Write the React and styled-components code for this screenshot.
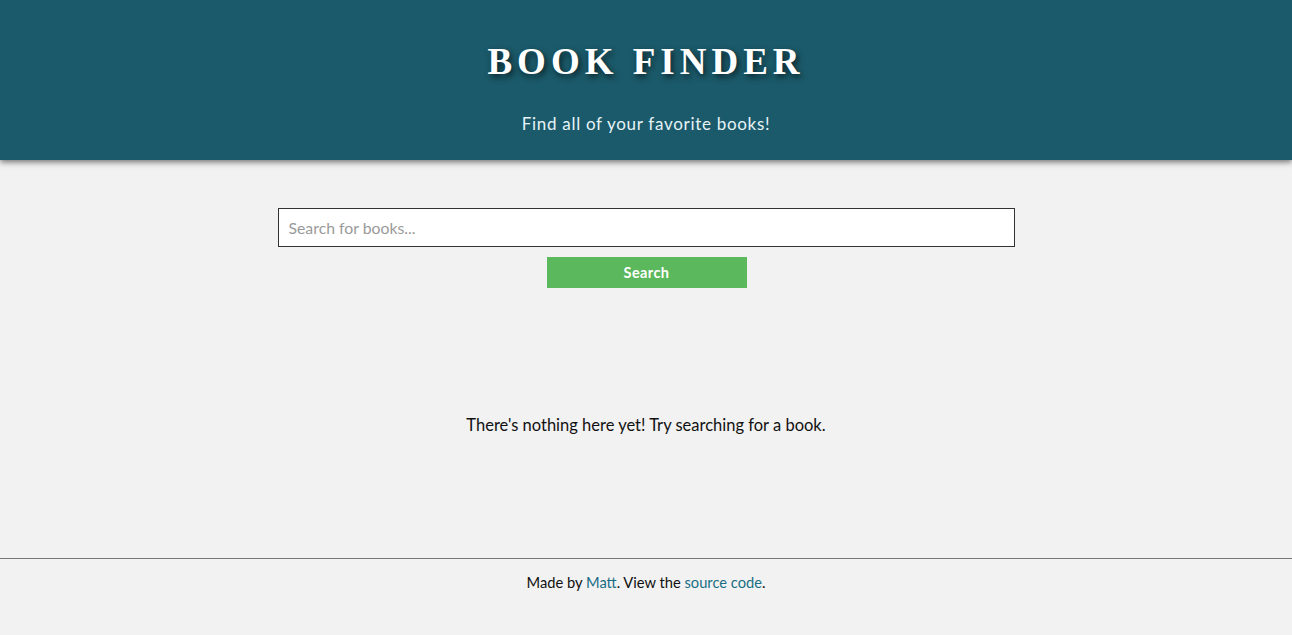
import styled, { createGlobalStyle } from "styled-components";

const GlobalStyle = createGlobalStyle`
  html, body {
    margin: 0;
    padding: 0;
    background: #f2f2f2;
    font-family: Lato, "Open Sans", sans-serif;
    color: #111;
  }
`;

const Page = styled.div`
  display: flex;
  flex-direction: column;
  min-height: 100vh;
`;

const Header = styled.header`
  height: 160px;
  box-sizing: border-box;
  padding-top: 40px;
  background: #1b5a6a;
  box-shadow: 0 2px 6px rgba(0, 0, 0, 0.55);
  text-align: center;
  position: relative;
  z-index: 1;
`;

const Title = styled.h1`
  margin: 0;
  font-family: "Liberation Serif", "Times New Roman", serif;
  font-size: 37px;
  line-height: 44px;
  font-weight: bold;
  letter-spacing: 5px;
  color: #fff;
  text-shadow: 2px 3px 6px rgba(0, 0, 0, 0.65);
`;

const Subtitle = styled.p`
  margin: 30px 0 0;
  font-size: 17px;
  line-height: 20px;
  letter-spacing: 0.7px;
  color: #e6f3f7;
`;

const Main = styled.main`
  flex: 1;
  display: flex;
  flex-direction: column;
  align-items: center;
  padding-top: 48px;
`;

const SearchForm = styled.form`
  display: flex;
  flex-direction: column;
  align-items: center;
  gap: 10px;
`;

const SearchInput = styled.input`
  width: 737px;
  height: 39px;
  box-sizing: border-box;
  padding: 0 10px;
  border: 1px solid #333;
  background: #fff;
  font-family: inherit;
  font-size: 15.8px;
  outline: none;

  &::placeholder {
    color: #9a9a9a;
  }
`;

const SearchButton = styled.button`
  width: 200px;
  height: 31px;
  margin-left: 1px;
  border: 0;
  background: #5cb85c;
  color: #fff;
  font-family: inherit;
  font-size: 14.5px;
  font-weight: bold;
  letter-spacing: 0.4px;
  cursor: pointer;
`;

const Empty = styled.p`
  margin: 127px 0 0;
  font-size: 16.5px;
  line-height: 20px;
`;

const Footer = styled.footer`
  height: 77px;
  box-sizing: border-box;
  border-top: 1px solid #777;
  padding-top: 13px;
  text-align: center;
  font-size: 14.7px;
  line-height: 20px;
`;

const Link = styled.a`
  color: #1a6e85;
  text-decoration: none;
`;

const App = () => {
  return (
    <Page>
      <GlobalStyle />
      <Header>
        <Title>BOOK FINDER</Title>
        <Subtitle>Find all of your favorite books!</Subtitle>
      </Header>
      <Main>
        <SearchForm onSubmit={(e) => e.preventDefault()}>
          <SearchInput type="text" placeholder="Search for books..." />
          <SearchButton type="submit">Search</SearchButton>
        </SearchForm>
        <Empty>There's nothing here yet! Try searching for a book.</Empty>
      </Main>
      <Footer>
        Made by <Link href="#">Matt</Link>. View the{" "}
        <Link href="#">source code</Link>.
      </Footer>
    </Page>
  );
};

export default App;
